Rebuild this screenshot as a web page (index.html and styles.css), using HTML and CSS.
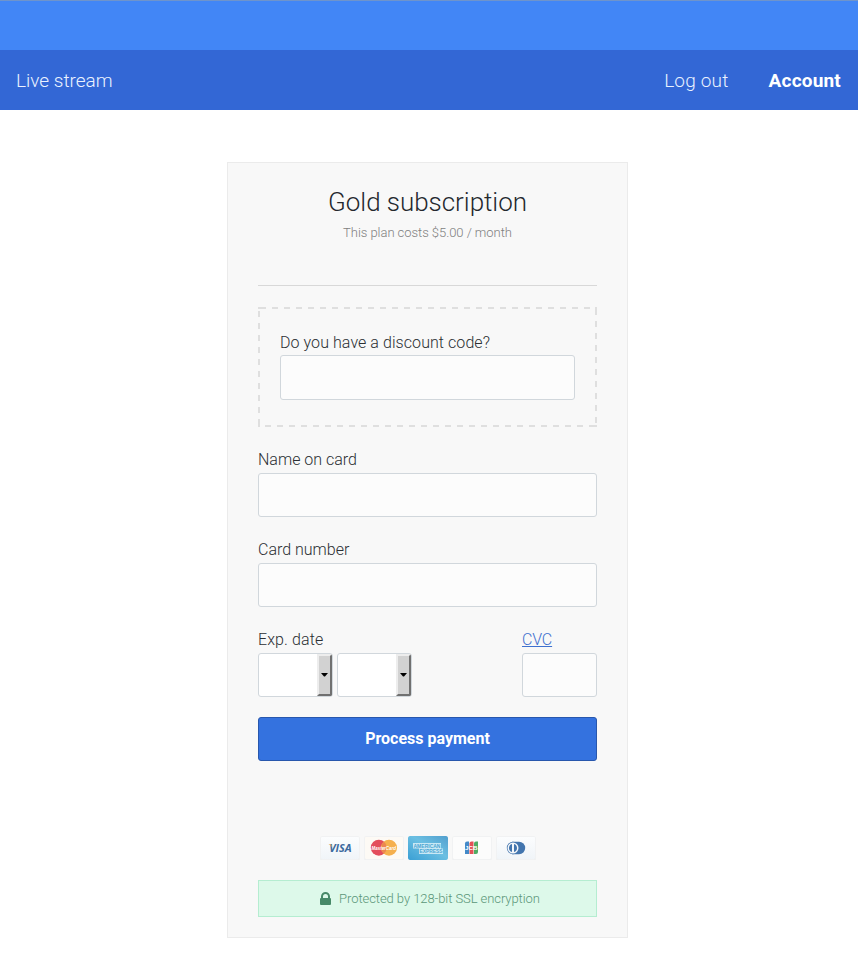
FILE: index.html
```html
<!DOCTYPE html>
<html lang="en">
<head>
<meta charset="utf-8">
<title>Gold subscription</title>
<link rel="stylesheet" href="styles.css">
</head>
<body>
<header class="topbar"></header>
<nav class="nav">
  <a href="#">Live stream</a>
  <div class="nav-right"><a href="#">Log out</a><a class="active" href="#">Account</a></div>
</nav>
<main class="panel">
  <h1>Gold subscription</h1>
  <p class="price">This plan costs $5.00 / month</p>
  <form>
    <div class="discount">
      <label for="code">Do you have a discount code?</label>
      <input id="code" type="text">
    </div>
    <div class="field">
      <label for="name">Name on card</label>
      <input id="name" type="text">
    </div>
    <div class="field">
      <label for="number">Card number</label>
      <input id="number" type="text">
    </div>
    <div class="row">
      <div>
        <label class="exp">Exp. date</label>
        <div class="selects">
          <div class="select"><span class="drop"><svg width="7" height="4" viewBox="0 0 7 4"><path d="M0 0H7L4 3.5H3Z"/></svg></span></div>
          <div class="select"><span class="drop"><svg width="7" height="4" viewBox="0 0 7 4"><path d="M0 0H7L4 3.5H3Z"/></svg></span></div>
        </div>
      </div>
      <div class="cvc">
        <label for="cvc"><a href="#">CVC</a></label>
        <input id="cvc" type="text">
      </div>
    </div>
    <button type="button">Process payment</button>
  </form>
  <div class="brands">
    <svg class="brand cool" viewBox="0 0 40 24"><text x="9.2" y="16.2" class="visa" textLength="22.5" lengthAdjust="spacingAndGlyphs">VISA</text><path d="M8.5 8.2H11L12.3 11.5Q11 9.2 8.5 8.2Z" fill="#e5a94f"/></svg>
    <svg class="brand warm" viewBox="0 0 40 24"><circle cx="14.8" cy="11.7" r="8" fill="#e34d5c"/><circle cx="25" cy="11.7" r="8" fill="#f5b04e"/><path d="M19.9 5.6A8 8 0 0 1 19.9 17.8A8 8 0 0 1 19.9 5.6Z" fill="#ec8750"/><text x="7.5" y="14" class="master" textLength="24.5" lengthAdjust="spacingAndGlyphs">MasterCard</text></svg>
    <svg class="brand amex" viewBox="0 0 40 24"><defs><linearGradient id="blue" x1="0" y1="1" x2="1" y2="0"><stop stop-color="#3a9fd4"/><stop offset=".55" stop-color="#6bbfe2"/><stop offset="1" stop-color="#519fce"/></linearGradient></defs><rect width="40" height="24" rx="1" fill="url(#blue)"/><path d="M5 7H33V12.5H35V18H11V12.5H5Z" fill="#d4edf7" opacity=".9"/><text x="5.5" y="12" class="express" textLength="27" lengthAdjust="spacingAndGlyphs">AMERICAN</text><text x="11.5" y="17.3" class="express" textLength="23" lengthAdjust="spacingAndGlyphs">EXPRESS</text></svg>
    <svg class="brand" viewBox="0 0 40 24"><path d="M15 5.5H17V18H13V7.5Q13 5.5 15 5.5Z" fill="#4389c8"/><path d="M19.5 5.5H21.5V18H17.5V7.5Q17.5 5.5 19.5 5.5Z" fill="#e35157"/><path d="M24 5.5H26V16Q26 18 24 18H22V7.5Q22 5.5 24 5.5Z" fill="#4fac64"/><text x="13" y="13.7" class="jcb" textLength="12.5" lengthAdjust="spacingAndGlyphs">JCB</text></svg>
    <svg class="brand cool" viewBox="0 0 40 24"><path d="M16 5.8H23A6.2 6.2 0 0 1 23 18.2H16Z" fill="#4375ae"/><circle cx="17" cy="12" r="6.2" fill="#4375ae"/><circle cx="17" cy="12" r="5.5" fill="#f4f7fa"/><path d="M16 7.9A4.3 4.3 0 0 0 16 16.1ZM18 7.9A4.3 4.3 0 0 1 18 16.1Z" fill="#4375ae"/></svg>
  </div>
  <div class="secure">
    <svg width="11" height="13" viewBox="0 0 11 13"><path d="M1 6V4.5A4.5 4.5 0 0 1 10 4.5V6Q11 6 11 7V12Q11 13 10 13H1Q0 13 0 12V7Q0 6 1 6ZM3 6H8V4.5A2.5 2.5 0 0 0 3 4.5Z" fill="#478968" fill-rule="evenodd"/></svg>
    <span>Protected by 128-bit SSL encryption</span>
  </div>
</main>
</body>
</html>
```
FILE: styles.css
```css
* { box-sizing: border-box; }
body { margin: 0; background: #fff; color: #2b2f33; font: 300 16px/20px Roboto, sans-serif; }
.topbar { height: 50px; background: #4286f6; border-top: 1px solid #6f94cb; }
.nav { height: 60px; padding: 2px 17px 0 16px; display: flex; align-items: center; justify-content: space-between; background: #3367d5; font-size: 19px; line-height: 24px; }
.nav a { color: #eaf2ff; text-decoration: none; }
.nav-right { display: flex; gap: 40px; letter-spacing: .2px; }
.nav .active { color: #fff; font-weight: 700; }
.panel { width: 401px; height: 776px; margin: 52px 0 0 227px; padding: 23px 30px 0; background: #f8f8f8; border: 1px solid #ebebeb; }
h1 { margin: 0; font-size: 26px; line-height: 32px; font-weight: 300; letter-spacing: -.04px; text-align: center; color: #24282e; }
.price { height: 68px; margin: 0 0 21px; padding-top: 5px; border-bottom: 1px solid #d8d8d8; color: #7f7f7f; font-size: 13px; line-height: 20px; letter-spacing: -.05px; text-align: center; }
label { display: block; height: 23px; line-height: 19px; }
input { display: block; width: 100%; height: 44px; padding: 0 12px; border: 1px solid #d1d7dc; border-radius: 3px; background: #fcfcfc; font: inherit; }
.discount {
  --line: #dfdfdf;
  --across: repeating-linear-gradient(90deg, var(--line) 0 6px, transparent 6px 12px);
  --down: repeating-linear-gradient(var(--line) 0 6px, transparent 6px 12px);
  --corner: linear-gradient(var(--line), var(--line));
  height: 120px;
  margin-bottom: 23px;
  padding: 26px 22px 0;
  background:
    var(--corner) 0 0 / 2px 2px no-repeat,
    var(--corner) 337px 0 / 2px 2px no-repeat,
    var(--corner) 0 118px / 2px 2px no-repeat,
    var(--corner) 337px 118px / 2px 2px no-repeat,
    var(--across) 2px 0 / 337px 2px no-repeat,
    var(--across) 7px 118px / 332px 2px no-repeat,
    var(--down) 0 4px / 2px 116px no-repeat,
    var(--down) 337px 2px / 2px 116px no-repeat;
}
.discount label { height: 22px; letter-spacing: .07px; }
.discount input { height: 45px; }
.field { margin-bottom: 23px; }
.row { display: flex; justify-content: space-between; margin-bottom: 20px; }
.exp { letter-spacing: .1px; }
.selects { display: flex; gap: 4px; }
.select { width: 75px; height: 44px; display: flex; justify-content: flex-end; background: #fff; border: 1px solid #d1d7dc; border-radius: 3px; overflow: hidden; }
.drop { width: 15px; display: flex; align-items: center; justify-content: center; background: #d2d2d2; border: 2px solid; border-color: #ededed #707070 #707070 #ededed; }
.cvc { width: 75px; }
.cvc a { color: #3f70cf; letter-spacing: -.15px; }
button { display: block; width: 100%; height: 44px; padding: 0; border: 1px solid #2857ad; border-radius: 3px; background: #3472df; color: #fff; font: 700 16px/20px Roboto, sans-serif; }
.brands { display: flex; justify-content: center; gap: 4px; margin: 75px 0 20px; padding-left: 1px; }
.brand { width: 40px; height: 24px; border-radius: 2px; background: #fcfcfc; box-shadow: inset 0 0 0 1px #f1f2f3, inset 0 -1px 0 #e7e8ea; }
.cool { background: linear-gradient(#fcfdfe, #f0f4f8); }
.warm { background: #fdfaf5; }
.amex { background: none; box-shadow: none; }
.visa { font: italic 700 10.5px "Open Sans", sans-serif; fill: #3c6a9e; }
.master { font: italic 700 6px "Liberation Sans", sans-serif; fill: #fff; }
.express { font: 700 6px "Liberation Sans", sans-serif; fill: #4ba6d2; }
.jcb { font: 700 5px "Liberation Sans", sans-serif; fill: #fff; }
.secure { height: 37px; display: flex; align-items: center; justify-content: center; gap: 8px; padding-left: 5px; border: 1px solid #b5edd1; background: #ddf9ea; color: #5a9678; font-size: 13px; letter-spacing: -.07px; }
```
